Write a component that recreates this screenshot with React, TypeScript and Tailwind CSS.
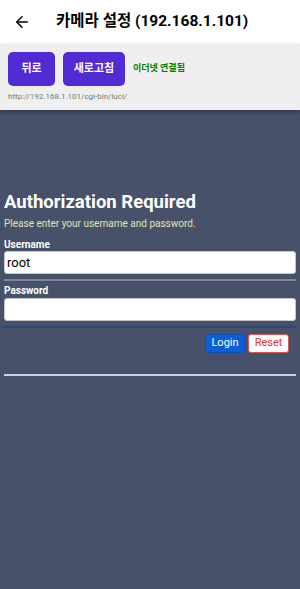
import { ArrowLeft } from "lucide-react";

const font = { fontFamily: "Roboto, 'Noto Sans CJK KR', sans-serif" };

export default function App() {
  return (
    <div className="w-[300px] h-[589px] flex flex-col bg-white overflow-hidden" style={font}>
      <div className="h-[44px] flex items-center shrink-0">
        <ArrowLeft className="ml-[13px] w-[18px] h-[18px] text-black" strokeWidth={2} />
        <div className="ml-[25px] text-[15.5px] font-bold text-black">카메라 설정 (192.168.1.101)</div>
      </div>
      <div className="bg-[#efefef] h-[66px] shrink-0 px-2 pt-2 relative z-10 shadow-[0_2px_4px_rgba(0,0,0,0.35)]">
        <div className="flex items-center gap-2 h-[34px]">
          <button className="h-[34px] w-[47px] rounded-[5px] bg-[#512bd4] text-white text-[11px] font-bold">뒤로</button>
          <button className="h-[34px] w-[62px] rounded-[5px] bg-[#512bd4] text-white text-[11px] font-bold">새로고침</button>
          <span className="text-[9px] font-bold text-[#008000]">이더넷 연결됨</span>
        </div>
        <div className="mt-[5px] text-[8px] text-[#777777]">http://192.168.1.101/cgi-bin/luci/</div>
      </div>
      <div className="flex-1 bg-[#475169] px-1 pt-[80px]">
        <h2 className="text-[18.5px] font-bold text-white leading-[24px]">Authorization Required</h2>
        <p className="mt-[3px] text-[10px] text-[#e6e2b4] leading-[14px]">Please enter your username and password.</p>
        <div className="mt-[8px] text-[10px] font-bold text-white leading-[12px]">Username</div>
        <div className="h-[23px] bg-white rounded-[3px] border border-[#c8c8c8] flex items-center px-[2px] text-[13px] text-black">root</div>
        <div className="mt-[5px] h-[2px] bg-[#7d8597]" />
        <div className="mt-[4px] text-[10px] font-bold text-white leading-[12px]">Password</div>
        <div className="mt-[1px] h-[23px] bg-white rounded-[3px] border border-[#c8c8c8]" />
        <div className="mt-[5px] h-[2px] bg-[#2b4a75]" />
        <div className="mt-[6px] flex justify-end gap-[3px] pr-[7px]">
          <button className="h-[19px] w-[40px] rounded-[3px] bg-[#0a5fd8] border border-[#0a4fb8] text-white text-[11px]">Login</button>
          <button className="h-[19px] w-[41px] rounded-[3px] bg-white border border-[#d55] text-[#d33] text-[11px]">Reset</button>
        </div>
        <div className="mt-[21px] h-[2px] bg-[#c8d0e2]" />
      </div>
    </div>
  );
}
